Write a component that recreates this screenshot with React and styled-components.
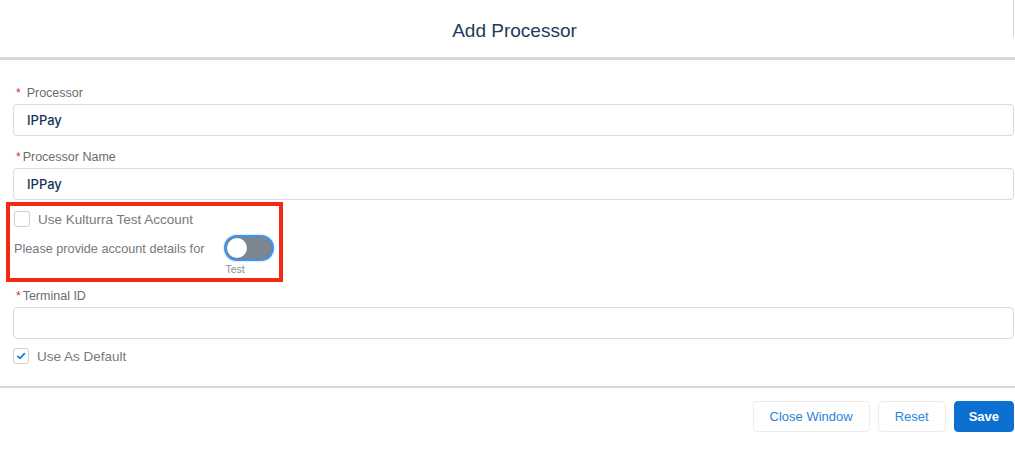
import React, { useState } from 'react';
import styled, { createGlobalStyle } from 'styled-components';

const GlobalStyle = createGlobalStyle`
  body {
    margin: 0;
    background: #fff;
    font-family: "Liberation Sans", Arial, sans-serif;
  }
`;

const Modal = styled.div`
  width: 1015px;
  height: 449px;
  display: flex;
  flex-direction: column;
  background: #fff;
  overflow: hidden;
`;

const Header = styled.header`
  flex: none;
  height: 57px;
  display: flex;
  align-items: center;
  justify-content: center;
  border-bottom: 3px solid #d9d9d9;
  position: relative;
  &::after {
    content: '';
    position: absolute;
    right: 1px;
    top: 0;
    height: 37px;
    border-right: 1px solid #d4d4d4;
  }
`;

const Title = styled.h2`
  margin: 0;
  padding: 5px 0 0 14px;
  font-weight: 400;
  font-size: 19px;
  color: #1f3a60;
`;

const Body = styled.div`
  flex: 1;
  display: flex;
  flex-direction: column;
  padding: 24px 1px 0 13px;
`;

const Field = styled.div`
  display: flex;
  flex-direction: column;
  gap: 2px;
  margin-top: ${p => p.$top || 0}px;
`;

const Label = styled.label`
  height: 18px;
  line-height: 18px;
  font-size: 12.5px;
  color: #6b6d70;
  padding-left: 3px;
  display: flex;
  gap: ${p => p.$gap || 2}px;
`;

const Req = styled.span`
  color: #c23934;
  font-size: 12px;
`;

const Input = styled.input`
  height: 32px;
  box-sizing: border-box;
  border: 1px solid #dddbda;
  border-radius: 4px;
  padding: 0 13px;
  font-family: Inter, "Liberation Sans", sans-serif;
  font-size: 13px;
  font-weight: 500;
  color: #16325c;
  outline: none;
  background: #fff;
`;

const Highlight = styled.section`
  margin: 2px 0 0 -7px;
  width: 277px;
  height: 80px;
  box-sizing: border-box;
  border: 4px solid #f22a12;
  padding: 5px 0 0 4px;
  display: flex;
  flex-direction: column;
`;

const CheckRow = styled.label`
  display: flex;
  align-items: center;
  gap: 8px;
  height: 16px;
  font-size: 13.5px;
  color: #77797c;
  margin-top: ${p => p.$top || 0}px;
`;

const Box = styled.span`
  width: 16px;
  height: 16px;
  box-sizing: border-box;
  border: 1px solid #cfcfcf;
  border-radius: 3px;
  background: #fff;
  display: flex;
  align-items: center;
  justify-content: center;
`;

const DetailsRow = styled.div`
  display: flex;
  align-items: flex-start;
  gap: 20px;
  margin-top: 8px;
`;

const DetailsText = styled.span`
  font-size: 12.7px;
  color: #77797c;
  line-height: 18px;
  margin-top: 5px;
`;

const ToggleCol = styled.div`
  display: flex;
  flex-direction: column;
  gap: 2px;
`;

const Track = styled.button`
  width: 50px;
  height: 26px;
  box-sizing: border-box;
  border-radius: 13px;
  border: 2px solid #3d94f0;
  background: #7c8590;
  padding: 1px;
  display: flex;
  align-items: center;
  cursor: pointer;
  box-shadow: 0 0 2px rgba(61, 148, 240, 0.6);
`;

const Knob = styled.span`
  width: 20px;
  height: 20px;
  border-radius: 50%;
  background: #fff;
  margin-left: ${p => (p.$on ? 24 : 0)}px;
`;

const ToggleLabel = styled.span`
  font-size: 10.5px;
  color: #8a8c8f;
  padding-left: 1px;
`;

const Footer = styled.footer`
  flex: none;
  box-sizing: border-box;
  height: 63px;
  border-top: 2px solid #d6d6d6;
  display: flex;
  justify-content: flex-end;
  align-items: flex-start;
  gap: 8px;
  padding: 13px 1px 0 0;
`;

const Button = styled.button`
  height: 31px;
  padding: 0 ${p => (p.$brand ? 14 : 16)}px;
  border-radius: 4px;
  font-family: inherit;
  font-size: 13px;
  font-weight: ${p => (p.$brand ? 700 : 400)};
  border: 1px solid ${p => (p.$brand ? '#0b70d0' : '#ececec')};
  background: ${p => (p.$brand ? '#0b70d0' : '#fff')};
  color: ${p => (p.$brand ? '#fff' : '#2a84da')};
  cursor: pointer;
`;

const Check = () => (
  <svg width="10" height="10" viewBox="0 0 10 10">
    <path d="M1.8 5.4 L4 7.4 L8.4 2.6" fill="none" stroke="#1a7fe0" strokeWidth="1.8" strokeLinecap="round" strokeLinejoin="round" />
  </svg>
);

export default function App() {
  const [test, setTest] = useState(false);
  return (
    <>
      <GlobalStyle />
      <Modal>
        <Header>
          <Title>Add Processor</Title>
        </Header>
        <Body>
          <Field>
            <Label $gap={6}>
              <Req>*</Req>Processor
            </Label>
            <Input defaultValue="IPPay" />
          </Field>
          <Field $top={12}>
            <Label>
              <Req>*</Req>Processor Name
            </Label>
            <Input defaultValue="IPPay" />
          </Field>
          <Highlight>
            <CheckRow>
              <Box />
              Use Kulturra Test Account
            </CheckRow>
            <DetailsRow>
              <DetailsText>Please provide account details for</DetailsText>
              <ToggleCol>
                <Track onClick={() => setTest(!test)}>
                  <Knob $on={test} />
                </Track>
                <ToggleLabel>Test</ToggleLabel>
              </ToggleCol>
            </DetailsRow>
          </Highlight>
          <Field $top={5}>
            <Label>
              <Req>*</Req>Terminal ID
            </Label>
            <Input />
          </Field>
          <CheckRow $top={9}>
            <Box>
              <Check />
            </Box>
            Use As Default
          </CheckRow>
        </Body>
        <Footer>
          <Button>Close Window</Button>
          <Button>Reset</Button>
          <Button $brand>Save</Button>
        </Footer>
      </Modal>
    </>
  );
}
